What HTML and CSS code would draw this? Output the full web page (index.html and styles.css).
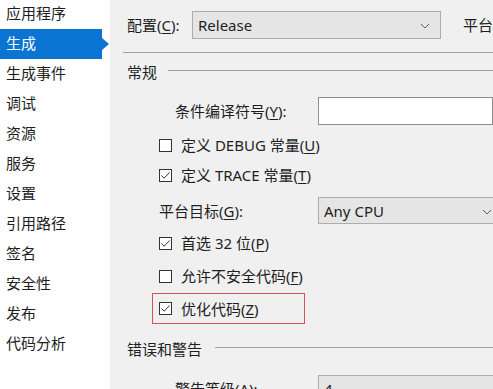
FILE: index.html
```html
<!DOCTYPE html>
<html lang="zh-CN">
<head>
  <meta charset="UTF-8">
  <title>项目属性 - 生成</title>
  <link rel="stylesheet" href="styles.css">
</head>
<body>

  <ul class="nav">
    <li>应用程序</li>
    <li class="active">生成</li>
    <li>生成事件</li>
    <li>调试</li>
    <li>资源</li>
    <li>服务</li>
    <li>设置</li>
    <li>引用路径</li>
    <li>签名</li>
    <li>安全性</li>
    <li>发布</li>
    <li>代码分析</li>
  </ul>

  <div class="main">
    <div class="config-row">
      <span class="config-label">配置(<u>C</u>):</span>
      <div class="combo combo-config">
        <span>Release</span>
        <svg class="chev" width="10" height="6" viewBox="0 0 10 6"><path d="M1 1 L5 5 L9 1" fill="none" stroke="#606060" stroke-width="1"/></svg>
      </div>
      <span class="platform-label">平台</span>
    </div>

    <div class="rule"></div>

    <div class="group-head head-general"><span>常规</span><i></i></div>

    <div class="section">
      <div class="field-row row-cond">
        <span class="field-label indent">条件编译符号(<u>Y</u>):</span>
        <div class="textbox"></div>
      </div>

      <div class="check-row row-debug">
        <span class="box"></span>
        <span>定义 DEBUG 常量(<u>U</u>)</span>
      </div>

      <div class="check-row row-trace">
        <span class="box"><svg width="11" height="11" viewBox="0 0 11 11"><path d="M1.5 5.5 L4.2 8.2 L9.5 2.5" fill="none" stroke="#333" stroke-width="1"/></svg></span>
        <span>定义 TRACE 常量(<u>T</u>)</span>
      </div>

      <div class="field-row row-platform">
        <span class="field-label">平台目标(<u>G</u>):</span>
        <div class="combo combo-wide">
          <span>Any CPU</span>
          <svg class="chev" width="10" height="6" viewBox="0 0 10 6"><path d="M1 1 L5 5 L9 1" fill="none" stroke="#606060" stroke-width="1"/></svg>
        </div>
      </div>

      <div class="check-row row-prefer">
        <span class="box"><svg width="11" height="11" viewBox="0 0 11 11"><path d="M1.5 5.5 L4.2 8.2 L9.5 2.5" fill="none" stroke="#333" stroke-width="1"/></svg></span>
        <span>首选 32 位(<u>P</u>)</span>
      </div>

      <div class="check-row row-unsafe">
        <span class="box"></span>
        <span>允许不安全代码(<u>F</u>)</span>
      </div>

      <div class="check-row row-optimize">
        <span class="box"><svg width="11" height="11" viewBox="0 0 11 11"><path d="M1.5 5.5 L4.2 8.2 L9.5 2.5" fill="none" stroke="#333" stroke-width="1"/></svg></span>
        <span>优化代码(<u>Z</u>)</span>
      </div>
    </div>

    <div class="group-head head-errors"><span>错误和警告</span><i></i></div>

    <div class="section">
      <div class="field-row row-warn">
        <span class="field-label indent">警告等级(<u>A</u>):</span>
        <div class="combo combo-wide"><span>4</span></div>
      </div>
    </div>
  </div>

</body>
</html>
```

FILE: styles.css
```css
* {
  box-sizing: border-box;
}

body {
  margin: 0;
  display: flex;
  height: 389px;
  overflow: hidden;
  background: #f0f0f0;
  color: #1e1e1e;
  font-family: "Noto Sans", "Noto Sans CJK SC", sans-serif;
  font-size: 15px;
  line-height: 20px;
}

u {
  text-decoration: underline;
  text-underline-offset: 2px;
}

/* left navigation */
.nav {
  list-style: none;
  margin: 0;
  padding: 0;
  width: 110px;
  flex: none;
  background: #fff;
}

.nav li {
  position: relative;
  width: 102px;
  height: 30px;
  padding-left: 6px;
  line-height: 28px;
}

.nav li:first-child {
  margin-top: -1px;
}

.nav li.active {
  background: #0a74d2;
  color: #fff;
}

.nav li.active::after {
  content: "";
  position: absolute;
  right: -7px;
  top: 9px;
  border-left: 7px solid #0a74d2;
  border-top: 6px solid transparent;
  border-bottom: 6px solid transparent;
}

/* main panel */
.main {
  flex: 1;
  min-width: 0;
  padding-left: 17px;
  display: flex;
  flex-direction: column;
  white-space: nowrap;
}

.main > *,
.section > * {
  flex-shrink: 0;
}

.config-row {
  display: flex;
  align-items: center;
  height: 28px;
  margin-top: 11px;
}

.config-label {
  width: 65px;
  flex: none;
}

.platform-label {
  margin-left: 22px;
}

.combo {
  position: relative;
  display: flex;
  align-items: center;
  height: 100%;
  padding-left: 5px;
  background: #e5e5e5;
  border: 1px solid #adadad;
  flex: none;
}

.combo-config {
  width: 249px;
}

.combo-wide {
  width: 200px;
}

.chev {
  position: absolute;
  right: 10px;
  top: 11px;
}

.combo-wide .chev {
  right: 25px;
}

.rule {
  height: 1px;
  margin: 13px 0 0 -4px;
  background: #a0a0a0;
}

.group-head {
  display: flex;
  align-items: center;
  height: 20px;
  gap: 11px;
}

.group-head i {
  flex: 1;
  height: 1px;
  background: #a0a0a0;
  margin-top: -3px;
}

.head-general {
  margin-top: 9px;
}

.head-errors {
  margin-top: 15px;
  gap: 13px;
}

.section {
  display: flex;
  flex-direction: column;
  padding-left: 32px;
}

.field-row {
  display: flex;
  align-items: center;
  height: 28px;
}

.field-label {
  width: 159px;
  flex: none;
}

.field-label.indent {
  padding-left: 16px;
}

.textbox {
  width: 200px;
  height: 100%;
  background: #fff;
  border: 1px solid #8f8f8f;
}

.row-cond {
  margin-top: 15px;
}

.check-row {
  display: flex;
  align-items: center;
  height: 20px;
}

.box {
  width: 13px;
  height: 13px;
  flex: none;
  margin-right: 9px;
  background: #fff;
  border: 1px solid #333;
  display: flex;
  align-items: center;
  justify-content: center;
}

.row-debug {
  margin-top: 10px;
}

.row-trace {
  margin-top: 10px;
}

.row-platform {
  margin-top: 12px;
  height: 27px;
}

.row-prefer {
  margin-top: 9px;
}

.row-unsafe {
  margin-top: 13px;
}

.row-optimize {
  margin-top: 7px;
  margin-left: -7px;
  width: 153px;
  height: 31px;
  padding-left: 6px;
  border: 1px solid #d8505c;
}

.row-warn {
  margin-top: 16px;
}
```
